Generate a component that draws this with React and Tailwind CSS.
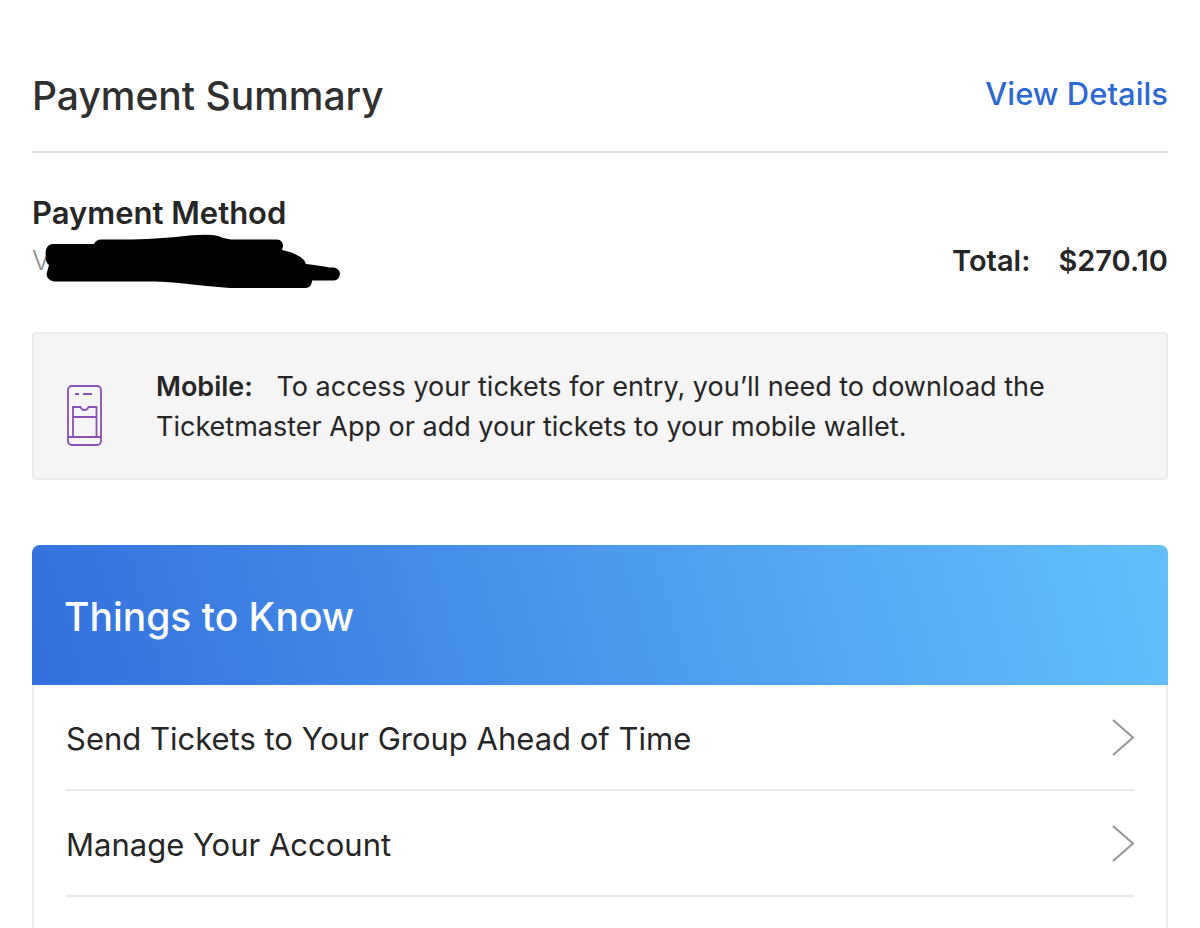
import React from "react";

const topics = ["Send Tickets to Your Group Ahead of Time", "Manage Your Account"];

export default function App() {
  return (
    <main className="flex min-h-screen flex-col bg-white px-8 pt-16 font-['Inter',sans-serif] text-[#262626]">
      <PaymentSummary />
      <MobileNotice />
      <ThingsToKnow />
    </main>
  );
}

function PaymentSummary() {
  return (
    <section>
      <div className="flex items-start justify-between border-b-2 border-[#e0e1e4] pb-6">
        <h1 className="text-[39px] leading-[63px] font-medium text-[#303030]">Payment Summary</h1>
        <a href="#details" className="text-[31px] leading-15 font-medium text-[#2d69d0]">
          View Details
        </a>
      </div>
      <div className="flex items-end justify-between pt-9">
        <div>
          <h2 className="text-[31px] leading-12 font-semibold">Payment Method</h2>
          <p className="relative text-[27px] leading-12 font-light text-[#8c8c8c]">
            V
            <Scribble />
          </p>
        </div>
        <p className="flex gap-7 text-[29px] leading-12 font-semibold">
          <span>Total:</span>
          <span>$270.10</span>
        </p>
      </div>
    </section>
  );
}

function Scribble() {
  return (
    <svg
      className="absolute -top-1 left-3 h-14 w-74"
      viewBox="44 233 296 56"
      fill="#000"
      aria-hidden="true"
    >
      <path d="M52 244H94Q96 239.500 101 239.500Q146 240 176 237Q207 233 218 236Q224 239 231 239.500H277Q283 240 283 246L282 250Q297 253 304 260L306 264Q324 266 329 267.500H334Q340 269 340 274Q339 280 334 280.500H312Q312 287 306 288H230Q205 286 188 284Q165 281 150 281.500H54Q47 280 46.500 274L49 265Q45 262 46 256Q44 246 52 244Z" />
    </svg>
  );
}

function MobileNotice() {
  return (
    <section className="mt-[47px] flex items-center rounded border-2 border-[#ebebeb] bg-[#f5f5f5] px-8 pt-[33px] pb-[31px]">
      <PhoneTicketIcon />
      <p className="ml-[50px] text-[27px] leading-10">
        <strong className="mr-4 font-semibold">Mobile:</strong>
        {" "}
        To access your tickets for entry, you’ll need to download the Ticketmaster App or add your
        tickets to your mobile wallet.
      </p>
    </section>
  );
}

function PhoneTicketIcon() {
  return (
    <svg
      className="mt-4 h-16 w-10 shrink-0"
      viewBox="0 0 40 64"
      fill="none"
      stroke="#8a4fba"
      strokeWidth="1.8"
      aria-hidden="true"
    >
      <rect x="2" y="3" width="33" height="59" rx="4" />
      <path d="M9 11h4M17 11h9M2 54h33M7 54V24h7.500q1 3 4 3t4-3H30.500V54M7 34h23.500" />
    </svg>
  );
}

function ThingsToKnow() {
  return (
    <section className="mt-[65px] flex flex-1 flex-col">
      <h2 className="rounded-t-lg bg-[linear-gradient(75deg,#3370dd,#64c0fa)] px-8 pt-[42px] pb-[38px] text-[39px] leading-15 font-medium text-white">
        Things to Know
      </h2>
      <ul className="flex-1 border-x-2 border-[#eeeeee] px-8">
        {topics.map((topic) => (
          <li key={topic} className="border-b-2 border-[#e9e9e9]">
            <button type="button" className="flex h-26 w-full items-center justify-between pt-1 text-left text-[31px] leading-12">
              {topic}
              <Chevron />
            </button>
          </li>
        ))}
      </ul>
    </section>
  );
}

function Chevron() {
  return (
    <svg className="h-10 w-6 shrink-0" viewBox="0 0 24 40" fill="none" stroke="#969696" strokeWidth="2" aria-hidden="true">
      <path d="M3 1l20 17.500L3 36" />
    </svg>
  );
}
